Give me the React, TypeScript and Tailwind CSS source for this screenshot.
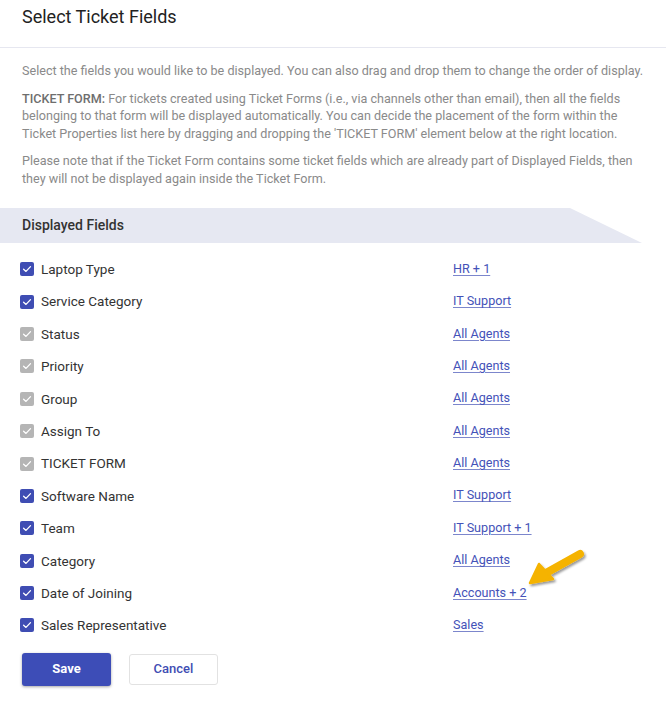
import React from "react";

type Field = { label: string; link: string; locked?: boolean };

const fields: Field[] = [
  { label: "Laptop Type", link: "HR + 1" },
  { label: "Service Category", link: "IT Support" },
  { label: "Status", link: "All Agents", locked: true },
  { label: "Priority", link: "All Agents", locked: true },
  { label: "Group", link: "All Agents", locked: true },
  { label: "Assign To", link: "All Agents", locked: true },
  { label: "TICKET FORM", link: "All Agents", locked: true },
  { label: "Software Name", link: "IT Support" },
  { label: "Team", link: "IT Support + 1" },
  { label: "Category", link: "All Agents" },
  { label: "Date of Joining", link: "Accounts + 2" },
  { label: "Sales Representative", link: "Sales" },
];

const Check = ({ locked }: { locked?: boolean }) => (
  <span
    className={`flex h-[14px] w-[14px] items-center justify-center rounded-[2px] ${
      locked ? "bg-[#b5b5b5]" : "bg-[#3f4db3]"
    }`}
  >
    <svg width="10" height="10" viewBox="0 0 10 10" fill="none">
      <path d="M1.6 5.2 L4 7.4 L8.5 2.6" stroke="white" strokeWidth="1.3" strokeLinecap="round" strokeLinejoin="round" />
    </svg>
  </span>
);

export default function App() {
  return (
    <div className="relative w-[666px] h-[703px] bg-white font-['Roboto',sans-serif] overflow-hidden">
      <div className="h-[48px] border-b border-[#e6e7f0] px-[22px] pt-[5px]">
        <h1 className="text-[18px] leading-[24px] text-[#222]">Select Ticket Fields</h1>
      </div>

      <div className="px-[22px] pt-[14px] text-[12.6px] leading-[17.5px] text-[#8a8a8a] flex flex-col gap-[10px]">
        <p>Select the fields you would like to be displayed. You can also drag and drop them to change the order of display.</p>
        <p>
          <strong className="font-medium text-[#6e6e6e]">TICKET FORM:</strong> For tickets created using Ticket Forms (i.e., via
          channels other than email), then all the fields belonging to that form will be displayed automatically. You can
          decide the placement of the form within the Ticket Properties list here by dragging and dropping the 'TICKET FORM'
          element below at the right location.
        </p>
        <p>
          Please note that if the Ticket Form contains some ticket fields which are already part of Displayed Fields, then
          they will not be displayed again inside the Ticket Form.
        </p>
      </div>

      <div className="mt-[21px] h-[35px] w-[642px] bg-[#e6e8f2] [clip-path:polygon(0_0,570px_0,100%_100%,0_100%)] flex items-center px-[22px]">
        <span className="text-[14px] font-medium text-[#333]">Displayed Fields</span>
      </div>

      <div className="mt-[10px] flex flex-col">
        {fields.map((f) => (
          <div key={f.label} className="flex h-[32.4px] items-center pl-[20px]">
            <div className="flex w-[433px] items-center gap-[7px]">
              <Check locked={f.locked} />
              <span className="text-[13.5px] text-[#333]">{f.label}</span>
            </div>
            <a className="text-[12.6px] text-[#4452b8] underline underline-offset-2 decoration-[#7c86cc]">{f.link}</a>
          </div>
        ))}
      </div>

      <div className="mt-[11px] flex items-center gap-[18px] pl-[22px]">
        <button className="h-[33px] w-[89px] rounded-[3px] bg-[#3d4db7] text-[13px] font-bold text-white shadow-[0_1px_3px_rgba(0,0,0,0.35)]">
          Save
        </button>
        <button className="h-[31px] w-[89px] rounded-[3px] border border-[#e2e2e2] bg-white text-[13px] font-medium text-[#3f4db3]">
          Cancel
        </button>
      </div>

      <svg className="absolute left-[524px] top-[544px]" width="66" height="46" viewBox="0 0 66 46">
        <defs>
          <filter id="sh" x="-20%" y="-20%" width="140%" height="140%">
            <feDropShadow dx="1.5" dy="2" stdDeviation="1.2" floodColor="#000" floodOpacity="0.4" />
          </filter>
        </defs>
        <g filter="url(#sh)">
          <path d="M56 10 L22 29" stroke="#f5b301" strokeWidth="8" strokeLinecap="round" />
          <path d="M6 39 L15 20 L29 35 Z" fill="#f5b301" stroke="#f5b301" strokeWidth="2.5" strokeLinejoin="round" />
        </g>
      </svg>
    </div>
  );
}
